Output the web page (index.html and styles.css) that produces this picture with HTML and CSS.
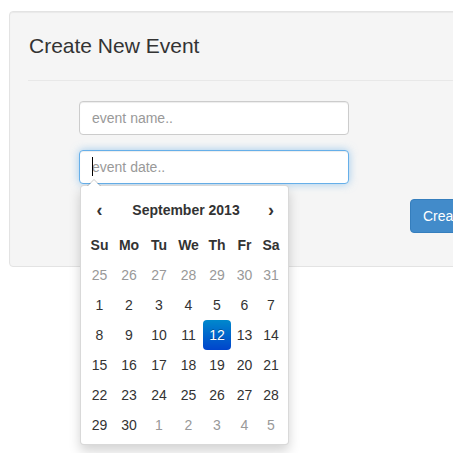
FILE: index.html
```html
<!DOCTYPE html>
<html>
<head>
<meta charset="utf-8">
<link rel="stylesheet" href="styles.css">
</head>
<body>
<div class="page">
  <div class="well">
    <h3 class="title">Create New Event</h3>
    <hr class="rule">
    <form class="form">
      <div class="group">
        <input class="control" type="text" placeholder="event name..">
      </div>
      <div class="group date-group">
        <input class="control focused" type="text" placeholder="event date..">
        <span class="caret"></span>
        <div class="datepicker">
          <div class="dp-grid">
            <div class="dp-nav">&#8249;</div>
            <div class="dp-switch">September 2013</div>
            <div class="dp-nav">&#8250;</div>

            <div class="dow">Su</div><div class="dow">Mo</div><div class="dow">Tu</div><div class="dow">We</div><div class="dow">Th</div><div class="dow">Fr</div><div class="dow">Sa</div>

            <div class="day old">25</div><div class="day old">26</div><div class="day old">27</div><div class="day old">28</div><div class="day old">29</div><div class="day old">30</div><div class="day old">31</div>
            <div class="day">1</div><div class="day">2</div><div class="day">3</div><div class="day">4</div><div class="day">5</div><div class="day">6</div><div class="day">7</div>
            <div class="day">8</div><div class="day">9</div><div class="day">10</div><div class="day">11</div><div class="day active">12</div><div class="day">13</div><div class="day">14</div>
            <div class="day">15</div><div class="day">16</div><div class="day">17</div><div class="day">18</div><div class="day">19</div><div class="day">20</div><div class="day">21</div>
            <div class="day">22</div><div class="day">23</div><div class="day">24</div><div class="day">25</div><div class="day">26</div><div class="day">27</div><div class="day">28</div>
            <div class="day">29</div><div class="day">30</div><div class="day old">1</div><div class="day old">2</div><div class="day old">3</div><div class="day old">4</div><div class="day old">5</div>
          </div>
        </div>
      </div>
      <div class="group button-group">
        <button class="btn" type="button">Create Event</button>
      </div>
    </form>
  </div>
</div>
</body>
</html>
```

FILE: styles.css
```css
html {
  overflow: hidden;
}

body {
  margin: 0;
  padding: 0;
  background: #ffffff;
  font-family: "Liberation Sans", Arial, sans-serif;
  font-size: 14px;
  color: #333333;
}

.page {
  box-sizing: border-box;
  padding: 11px 0 0 9px;
  width: 453px;
  min-height: 453px;
  overflow: hidden;
}

.well {
  width: 700px;
  background: #f5f5f5;
  border: 1px solid #e3e3e3;
  border-radius: 4px;
  box-shadow: inset 0 1px 1px rgba(0, 0, 0, 0.05);
  padding: 22px 19px 33px 19px;
}

.title {
  margin: 0;
  font-size: 21px;
  line-height: 23px;
  font-weight: normal;
  color: #333333;
}

.rule {
  margin: 23px 0 20px -1px;
  border: 0;
  border-top: 1px solid #e8e8e8;
  height: 0;
}

.form {
  padding-left: 50px;
  display: flex;
  flex-direction: column;
  gap: 15px;
}

.group {
  position: relative;
  width: 270px;
}

.control {
  display: block;
  box-sizing: border-box;
  width: 270px;
  height: 34px;
  margin: 0;
  padding: 6px 12px;
  font-family: "Liberation Sans", Arial, sans-serif;
  font-size: 14px;
  color: #555555;
  background: #ffffff;
  border: 1px solid #cccccc;
  border-radius: 4px;
  box-shadow: inset 0 1px 1px rgba(0, 0, 0, 0.075);
  outline: none;
}

.control::placeholder {
  color: #999999;
  opacity: 1;
}

.control.focused {
  border-color: #66afe9;
  box-shadow: inset 0 1px 1px rgba(0, 0, 0, 0.075), 0 0 8px rgba(102, 175, 233, 0.6);
}

.caret {
  position: absolute;
  left: 13px;
  top: 7px;
  width: 1px;
  height: 19px;
  background: #000000;
}

.datepicker {
  position: absolute;
  top: 35px;
  left: 1px;
  z-index: 10;
  background: #ffffff;
  border: 1px solid rgba(0, 0, 0, 0.15);
  border-radius: 4px;
  box-shadow: 0 6px 12px rgba(0, 0, 0, 0.175);
  padding: 4px;
}

.datepicker::before {
  content: "";
  position: absolute;
  top: -7px;
  left: 6px;
  border-left: 7px solid transparent;
  border-right: 7px solid transparent;
  border-bottom: 7px solid rgba(0, 0, 0, 0.2);
}

.datepicker::after {
  content: "";
  position: absolute;
  top: -6px;
  left: 7px;
  border-left: 6px solid transparent;
  border-right: 6px solid transparent;
  border-bottom: 6px solid #ffffff;
}

.dp-grid {
  display: grid;
  grid-template-columns: 29px 30px 30px 29px 28px 27px 26px;
  grid-template-rows: 40px repeat(7, 30px);
  align-items: center;
  justify-items: center;
}

.dp-nav {
  font-weight: bold;
  font-size: 18px;
  line-height: 30px;
  color: #333333;
}

.dp-switch {
  grid-column: 2 / span 5;
  font-weight: bold;
  font-size: 14px;
  color: #333333;
}

.dow {
  font-weight: bold;
  font-size: 14px;
  color: #333333;
}

.day {
  width: 100%;
  height: 30px;
  line-height: 30px;
  text-align: center;
  font-size: 14px;
  color: #333333;
  border-radius: 4px;
}

.day.old {
  color: #999999;
}

.day.active {
  color: #ffffff;
  background: linear-gradient(to bottom, #0088cc, #0044cc);
  text-shadow: 0 -1px 0 rgba(0, 0, 0, 0.25);
}

.button-group {
  width: auto;
}

.btn {
  margin-left: 331px;
  height: 34px;
  padding: 6px 12px;
  font-family: "Liberation Sans", Arial, sans-serif;
  font-size: 14px;
  color: #ffffff;
  background: #428bca;
  border: 1px solid #357ebd;
  border-radius: 4px;
  white-space: nowrap;
  cursor: pointer;
}
```
